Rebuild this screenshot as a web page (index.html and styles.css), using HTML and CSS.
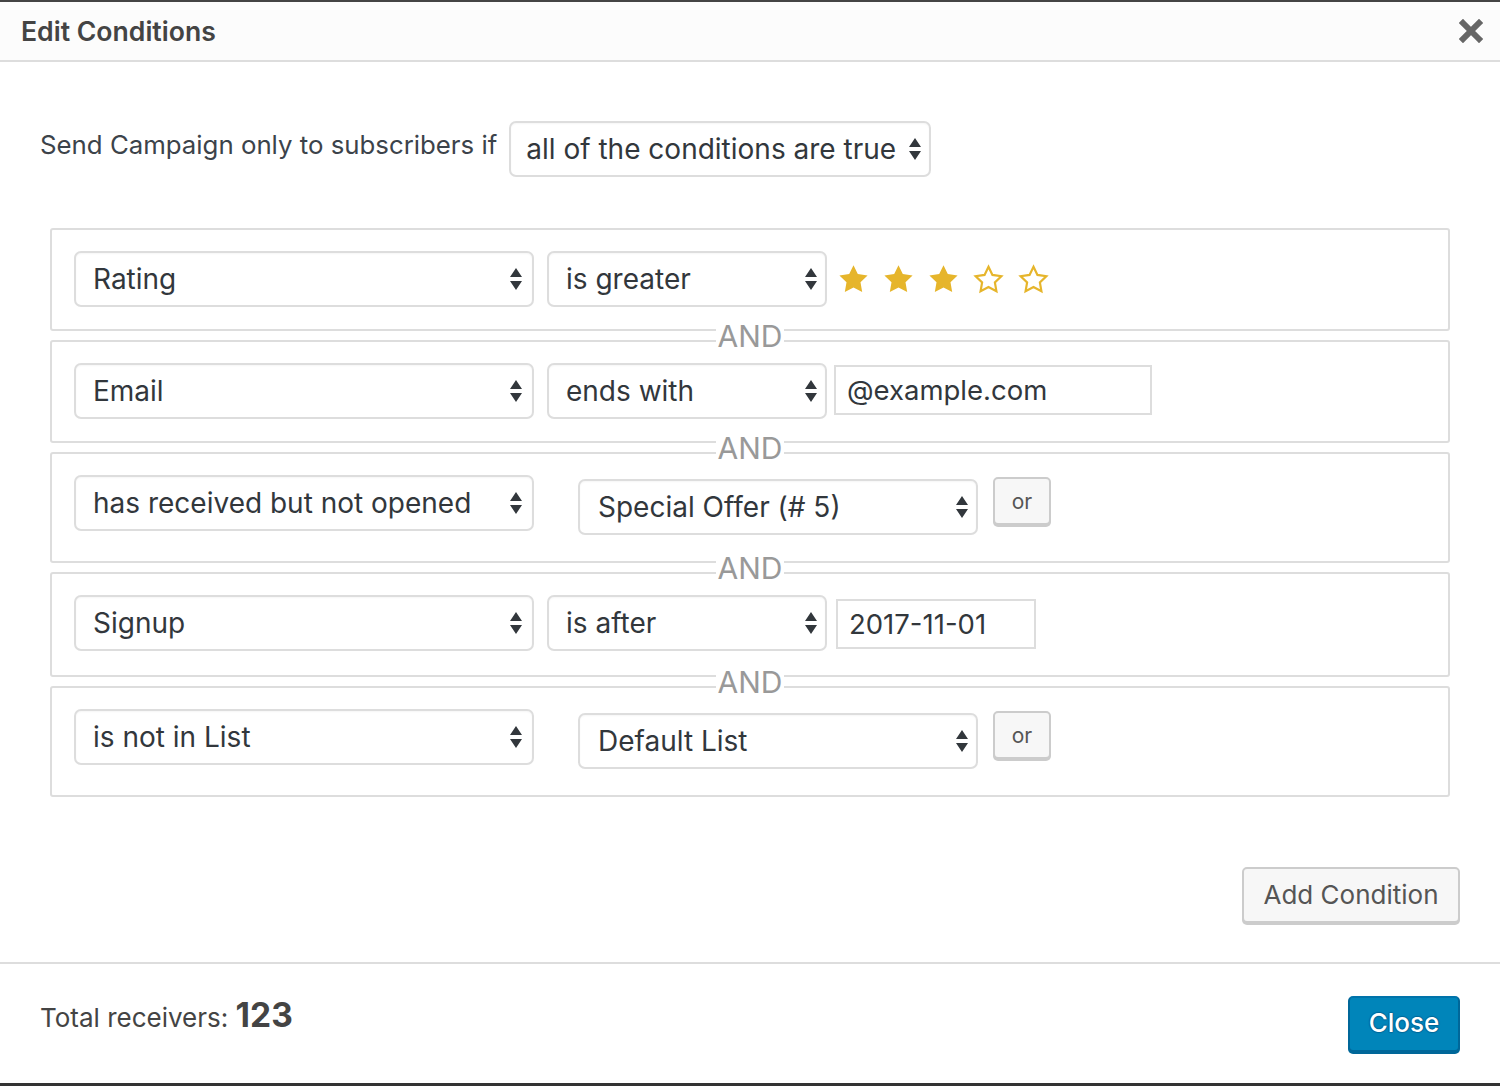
FILE: index.html
```html
<!DOCTYPE html>
<html>
<head>
<meta charset="utf-8">
<link rel="stylesheet" href="styles.css">
</head>
<body>
<div class="modal">
  <header class="modal-head">
    <h1 class="title">Edit Conditions</h1>
    <button class="close-x" aria-label="Close">
      <svg width="24" height="24" viewBox="0 0 24 24"><path d="M4 4 L20 20 M20 4 L4 20" stroke="#666" stroke-width="6" stroke-linecap="square" fill="none"/></svg>
    </button>
  </header>

  <main class="modal-body">
    <div class="intro">
      <span class="intro-text">Send Campaign only to subscribers if</span>
      <div class="select select-intro"><span>all of the conditions are true</span><svg class="arr" width="12" height="24" viewBox="0 0 12 24"><path d="M6 1 L12 10 L0 10 Z M0 14 L12 14 L6 23 Z" fill="#32373c"/></svg></div>
    </div>

    <div class="conditions">
      <div class="cond">
        <div class="select select-field"><span>Rating</span><svg class="arr" width="12" height="24" viewBox="0 0 12 24"><path d="M6 1 L12 10 L0 10 Z M0 14 L12 14 L6 23 Z" fill="#32373c"/></svg></div>
        <div class="select select-op"><span>is greater</span><svg class="arr" width="12" height="24" viewBox="0 0 12 24"><path d="M6 1 L12 10 L0 10 Z M0 14 L12 14 L6 23 Z" fill="#32373c"/></svg></div>
        <div class="stars">
          <svg class="star" width="35" height="35" viewBox="0 0 24 24"><path d="M12 2.2l2.95 6.1 6.7.95-4.85 4.7 1.15 6.65L12 17.45 6.05 20.6 7.2 13.95 2.35 9.25l6.7-.95z" fill="#e6b52b"/></svg>
          <svg class="star" width="35" height="35" viewBox="0 0 24 24"><path d="M12 2.2l2.95 6.1 6.7.95-4.85 4.7 1.15 6.65L12 17.45 6.05 20.6 7.2 13.95 2.35 9.25l6.7-.95z" fill="#e6b52b"/></svg>
          <svg class="star" width="35" height="35" viewBox="0 0 24 24"><path d="M12 2.2l2.95 6.1 6.7.95-4.85 4.7 1.15 6.65L12 17.45 6.05 20.6 7.2 13.95 2.35 9.25l6.7-.95z" fill="#e6b52b"/></svg>
          <svg class="star" width="35" height="35" viewBox="0 0 24 24"><path d="M12 3.3l2.7 5.55 6.1.87-4.42 4.28 1.05 6.06L12 17.2l-5.43 2.86 1.05-6.06L3.2 9.72l6.1-.87z" fill="none" stroke="#e6b52b" stroke-width="1.5" stroke-linejoin="miter"/></svg>
          <svg class="star" width="35" height="35" viewBox="0 0 24 24"><path d="M12 3.3l2.7 5.55 6.1.87-4.42 4.28 1.05 6.06L12 17.2l-5.43 2.86 1.05-6.06L3.2 9.72l6.1-.87z" fill="none" stroke="#e6b52b" stroke-width="1.5" stroke-linejoin="miter"/></svg>
        </div>
      </div>
      <div class="and"><span>AND</span></div>

      <div class="cond">
        <div class="select select-field"><span>Email</span><svg class="arr" width="12" height="24" viewBox="0 0 12 24"><path d="M6 1 L12 10 L0 10 Z M0 14 L12 14 L6 23 Z" fill="#32373c"/></svg></div>
        <div class="select select-op"><span>ends with</span><svg class="arr" width="12" height="24" viewBox="0 0 12 24"><path d="M6 1 L12 10 L0 10 Z M0 14 L12 14 L6 23 Z" fill="#32373c"/></svg></div>
        <div class="input input-text">@example.com</div>
      </div>
      <div class="and"><span>AND</span></div>

      <div class="cond">
        <div class="select select-field"><span>has received but not opened</span><svg class="arr" width="12" height="24" viewBox="0 0 12 24"><path d="M6 1 L12 10 L0 10 Z M0 14 L12 14 L6 23 Z" fill="#32373c"/></svg></div>
        <div class="select select-value"><span>Special Offer (# 5)</span><svg class="arr" width="12" height="24" viewBox="0 0 12 24"><path d="M6 1 L12 10 L0 10 Z M0 14 L12 14 L6 23 Z" fill="#32373c"/></svg></div>
        <button class="btn btn-or">or</button>
      </div>
      <div class="and"><span>AND</span></div>

      <div class="cond">
        <div class="select select-field"><span>Signup</span><svg class="arr" width="12" height="24" viewBox="0 0 12 24"><path d="M6 1 L12 10 L0 10 Z M0 14 L12 14 L6 23 Z" fill="#32373c"/></svg></div>
        <div class="select select-op"><span>is after</span><svg class="arr" width="12" height="24" viewBox="0 0 12 24"><path d="M6 1 L12 10 L0 10 Z M0 14 L12 14 L6 23 Z" fill="#32373c"/></svg></div>
        <div class="input input-date">2017-11-01</div>
      </div>
      <div class="and"><span>AND</span></div>

      <div class="cond">
        <div class="select select-field"><span>is not in List</span><svg class="arr" width="12" height="24" viewBox="0 0 12 24"><path d="M6 1 L12 10 L0 10 Z M0 14 L12 14 L6 23 Z" fill="#32373c"/></svg></div>
        <div class="select select-value"><span>Default List</span><svg class="arr" width="12" height="24" viewBox="0 0 12 24"><path d="M6 1 L12 10 L0 10 Z M0 14 L12 14 L6 23 Z" fill="#32373c"/></svg></div>
        <button class="btn btn-or">or</button>
      </div>
    </div>

    <div class="actions">
      <button class="btn btn-add">Add Condition</button>
    </div>
  </main>

  <footer class="modal-foot">
    <div class="total">Total receivers: <strong>123</strong></div>
    <button class="btn-primary">Close</button>
  </footer>
</div>
</body>
</html>
```

FILE: styles.css
```css
* { box-sizing: border-box; }
html, body { margin: 0; padding: 0; background: #fff; }
body {
  font-family: Inter, "Noto Sans", "Liberation Sans", sans-serif;
  color: #444;
}
.modal {
  width: 1500px;
  height: 1086px;
  border-top: 2px solid #444;
  border-bottom: 3px solid #333;
  display: flex;
  flex-direction: column;
}
.modal-head {
  height: 60px;
  background: #fcfcfc;
  border-bottom: 2px solid #ddd;
  display: flex;
  align-items: center;
  justify-content: space-between;
  padding: 0 17px 0 21px;
}
.title {
  margin: 0;
  font-size: 26.6px;
  font-weight: 600;
  color: #444;
}
.close-x {
  background: none;
  border: 0;
  padding: 0;
  width: 24px;
  height: 24px;
  display: flex;
}
.modal-body {
  flex: 1;
  padding: 59px 40px 0 40px;
}
.intro {
  display: flex;
  align-items: center;
}
.intro-text {
  font-size: 25.8px;
  color: #3c434a;
  margin-right: 12px;
  margin-top: -10px;
}
.select {
  height: 56px;
  border: 2px solid #ddd;
  border-radius: 7px;
  background: #fff;
  box-shadow: inset 0 1px 2px rgba(0,0,0,0.04);
  display: flex;
  align-items: center;
  justify-content: space-between;
  padding: 0 10px 0 17px;
  font-size: 28px;
  color: #32373c;
  flex: none;
}
.select-intro { width: 422px; padding-left: 15px; padding-right: 8px; }
.select-field { width: 460px; }
.select-op { width: 280px; margin-left: 13px; padding-right: 8px; }
.select-value { width: 400px; margin: 4px 0 4px 44px; padding-left: 18px; padding-right: 8px; }
.arr { flex: none; }

.conditions {
  margin: 51px 10px 0 10px;
}
.cond {
  border: 2px solid #ddd;
  border-radius: 3px;
  padding: 21px 22px 22px 22px;
  display: flex;
  align-items: flex-start;
}
.and {
  height: 9px;
  display: flex;
  justify-content: center;
  align-items: center;
}
.and span {
  position: relative;
  z-index: 1;
  background: #fff;
  padding: 0 2px;
  font-size: 30px;
  line-height: 30px;
  color: #999;
}
.stars {
  display: flex;
  gap: 10px;
  margin-left: 9px;
  height: 56px;
  align-items: center;
  margin-top: 0;
}
.star { display: block; }
.input {
  border: 2px solid #ddd;
  background: #fff;
  height: 50px;
  display: flex;
  align-items: center;
  font-size: 27.5px;
  color: #32373c;
  padding: 0 11px;
  flex: none;
}
.input-text { width: 318px; margin-left: 7px; margin-top: 2px; }
.input-date { width: 200px; margin: 4px 0 4px 9px; }

.btn {
  font-family: inherit;
  background: #f7f7f7;
  border: 2px solid #ccc;
  border-radius: 5px;
  box-shadow: 0 2px 0 #ccc;
  color: #555;
  cursor: pointer;
}
.btn-or {
  width: 58px;
  height: 48px;
  margin: 2px 0 0 15px;
  font-size: 21px;
  padding: 0;
  flex: none;
}
.actions {
  display: flex;
  justify-content: flex-end;
  margin-top: 70px;
}
.btn-add {
  width: 218px;
  height: 56px;
  font-size: 26px;
  padding: 0 0 2px 0;
}
.modal-foot {
  height: 121px;
  border-top: 2px solid #ddd;
  display: flex;
  align-items: center;
  justify-content: space-between;
  padding: 0 40px 0 40px;
}
.total {
  font-size: 26px;
  color: #444;
  margin-top: -18px;
}
.total strong {
  font-size: 33.5px;
  font-weight: 700;
}
.btn-primary {
  font-family: inherit;
  width: 112px;
  height: 56px;
  background: #0085ba;
  border: 2px solid;
  border-color: #0073aa #006799 #006799;
  border-radius: 5px;
  box-shadow: 0 2px 0 #006799;
  color: #fff;
  font-size: 26px;
  font-weight: 500;
  text-shadow: 0 -1px 1px #006799, 1px 0 1px #006799, 0 1px 1px #006799, -1px 0 1px #006799;
  padding: 0 0 2px 0;
}
```
